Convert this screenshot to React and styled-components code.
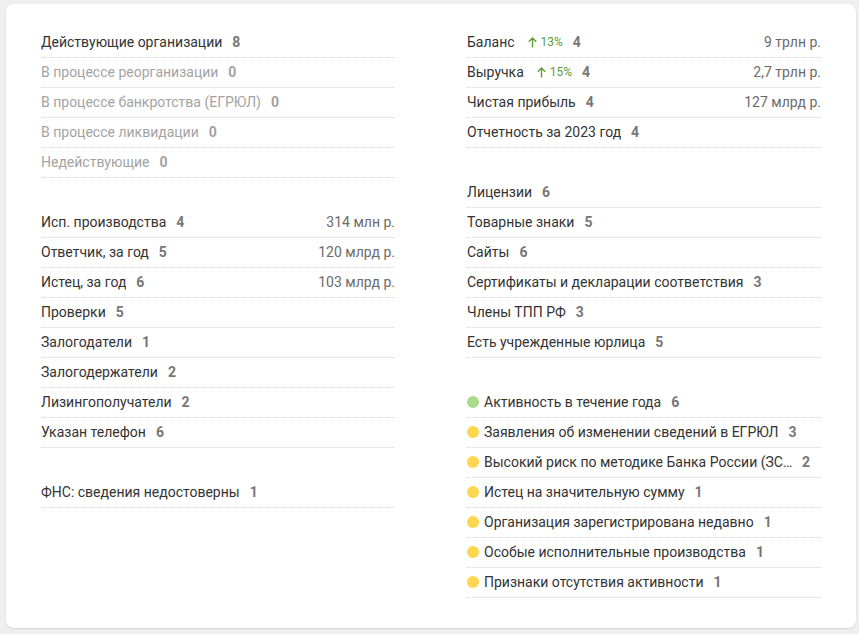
import React from "react";
import styled, { createGlobalStyle } from "styled-components";

const Global = createGlobalStyle`
  html, body { margin: 0; padding: 0; background: #efefef; }
  body { font-family: Roboto, "Noto Sans", Arial, sans-serif; }
  * { box-sizing: border-box; }
`;

const Page = styled.div`
  padding: 4px 3px 5px 6px;
`;

const Card = styled.div`
  width: 850px;
  background: #fff;
  border-radius: 8px;
  box-shadow: 0 1px 2px rgba(0, 0, 0, 0.12);
  padding: 24px 35px 30px 35px;
  display: grid;
  grid-template-columns: 354px 354px;
  column-gap: 72px;
  align-items: start;
`;

const Column = styled.div`
  display: flex;
  flex-direction: column;
  gap: 30px;
`;

const Section = styled.div`
  display: flex;
  flex-direction: column;
`;

const Row = styled.div`
  display: flex;
  align-items: center;
  height: 30px;
  padding: 4px 0 5px;
  border-bottom: 1px dotted #d6d6d6;
  font-size: 14px;
  line-height: 20px;
  color: ${(p) => (p.$muted ? "#a3a3a3" : "#333333")};
`;

const Dot = styled.span`
  flex: none;
  width: 12px;
  height: 12px;
  border-radius: 50%;
  margin-right: 5px;
  background: ${(p) => (p.$color === "green" ? "#a9db8c" : "#ffd64f")};
`;

const Label = styled.span`
  white-space: nowrap;
  overflow: hidden;
  text-overflow: ellipsis;
  min-width: 0;
  flex: 0 1 auto;
  max-width: ${(p) => p.$max || "none"};
`;

const Count = styled.span`
  flex: none;
  margin-left: ${(p) => p.$gap || "10px"};
  font-weight: 700;
  color: ${(p) => (p.$muted ? "#a3a3a3" : "#777777")};
`;

const Trend = styled.span`
  flex: none;
  display: inline-flex;
  align-items: center;
  margin-left: 13px;
  font-size: 12px;
  color: #5e9d34;
  gap: 4px;
`;

const Value = styled.span`
  margin-left: auto;
  color: #6b6b6b;
  white-space: nowrap;
`;

const Arrow = () => (
  <svg width="9" height="11" viewBox="0 0 9 11" fill="none">
    <path d="M4.5 10.5V1.2M0.8 4.8L4.5 1.1L8.2 4.8" stroke="#5e9d34" strokeWidth="1.4" />
  </svg>
);

const Item = ({ label, count, value, muted, dot, trend, max, gap }) => (
  <Row $muted={muted}>
    {dot && <Dot $color={dot} />}
    <Label $max={max}>{label}</Label>
    {trend && (
      <Trend>
        <Arrow />
        {trend}
      </Trend>
    )}
    <Count $muted={muted} $gap={gap}>{count}</Count>
    {value && <Value>{value}</Value>}
  </Row>
);

export default function App() {
  return (
    <>
      <Global />
      <Page>
        <Card>
          <Column>
            <Section>
              <Item label="Действующие организации" count="8" />
              <Item label="В процессе реорганизации" count="0" muted />
              <Item label="В процессе банкротства (ЕГРЮЛ)" count="0" muted />
              <Item label="В процессе ликвидации" count="0" muted />
              <Item label="Недействующие" count="0" muted />
            </Section>
            <Section>
              <Item label="Исп. производства" count="4" value="314 млн р." />
              <Item label="Ответчик, за год" count="5" value="120 млрд р." />
              <Item label="Истец, за год" count="6" value="103 млрд р." />
              <Item label="Проверки" count="5" />
              <Item label="Залогодатели" count="1" />
              <Item label="Залогодержатели" count="2" />
              <Item label="Лизингополучатели" count="2" />
              <Item label="Указан телефон" count="6" />
            </Section>
            <Section>
              <Item label="ФНС: сведения недостоверны" count="1" />
            </Section>
          </Column>
          <Column>
            <Section>
              <Item label="Баланс" trend="13%" count="4" value="9 трлн р." />
              <Item label="Выручка" trend="15%" count="4" value="2,7 трлн р." />
              <Item label="Чистая прибыль" count="4" value="127 млрд р." />
              <Item label="Отчетность за 2023 год" count="4" />
            </Section>
            <Section>
              <Item label="Лицензии" count="6" />
              <Item label="Товарные знаки" count="5" />
              <Item label="Сайты" count="6" />
              <Item label="Сертификаты и декларации соответствия" count="3" />
              <Item label="Члены ТПП РФ" count="3" />
              <Item label="Есть учрежденные юрлица" count="5" />
            </Section>
            <Section>
              <Item dot="green" label="Активность в течение года" count="6" />
              <Item dot="yellow" label="Заявления об изменении сведений в ЕГРЮЛ" count="3" />
              <Item dot="yellow" label="Высокий риск по методике Банка России (ЗСК)" count="2" max="312px" gap="6px" />
              <Item dot="yellow" label="Истец на значительную сумму" count="1" />
              <Item dot="yellow" label="Организация зарегистрирована недавно" count="1" />
              <Item dot="yellow" label="Особые исполнительные производства" count="1" />
              <Item dot="yellow" label="Признаки отсутствия активности" count="1" />
            </Section>
          </Column>
        </Card>
      </Page>
    </>
  );
}
